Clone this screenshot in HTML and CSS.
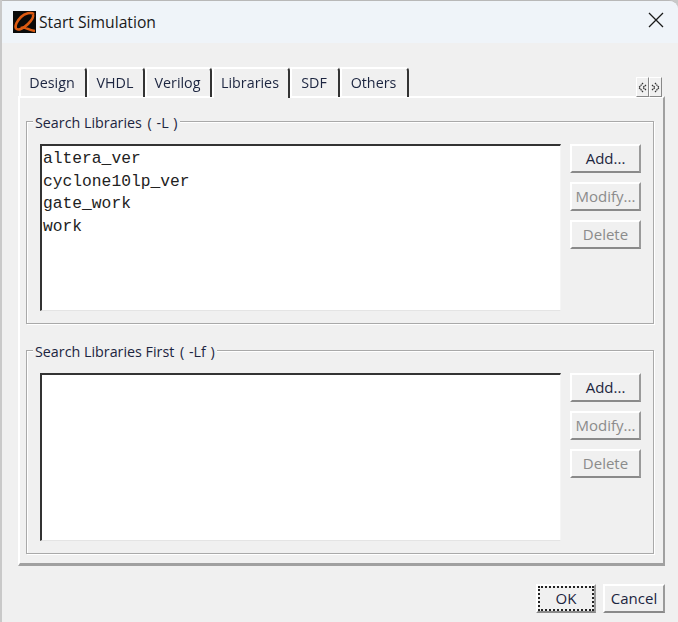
FILE: index.html
```html
<!DOCTYPE html>
<html lang="en">
<head>
<meta charset="utf-8">
<title>Start Simulation</title>
<link rel="stylesheet" href="styles.css">
</head>
<body>
<div class="window">
  <header class="titlebar">
    <svg class="logo" width="23" height="22" viewBox="0 0 23 22">
      <rect width="23" height="22" fill="#0a0a0a"/>
      <path d="M21 3C18 1 12 2 8 6C4 10 1.500 15 3 17.500C5 20 11 17 15 13C18 10 21 6 20 3.500M8 17C12 15 14 19 22 20" fill="none" stroke="#dc5a12" stroke-width="2.600"/>
    </svg>
    <span class="title">Start Simulation</span>
    <svg class="close" width="16" height="16" viewBox="0 0 16 16">
      <path d="M1 1L15 15M15 1L1 15" stroke="#1a1a1a" stroke-width="1.3" fill="none"/>
    </svg>
  </header>
  <div class="content">
    <nav class="tabbar">
      <div class="tab tab-design">Design</div>
      <div class="tab tab-vhdl">VHDL</div>
      <div class="tab tab-verilog">Verilog</div>
      <div class="tab tab-libraries active">Libraries</div>
      <div class="tab tab-sdf">SDF</div>
      <div class="tab tab-others">Others</div>
      <div class="scroller">
        <div class="scroll-btn"><svg width="9" height="11" viewBox="0 0 9 11"><path d="M5 1L1 5.500L5 10M8 3L5 5.500L8 8" fill="none" stroke="#333" stroke-width="1.300" stroke-dasharray="1.500 .6"/></svg></div>
        <div class="scroll-btn"><svg width="9" height="11" viewBox="0 0 9 11"><path d="M4 1L8 5.500L4 10M1 3L4 5.500L1 8" fill="none" stroke="#333" stroke-width="1.300" stroke-dasharray="1.500 .6"/></svg></div>
      </div>
    </nav>
    <main class="panel">
      <section class="group group-first">
        <div class="legend">Search Libraries <span class="flag">( -L )</span></div>
        <div class="group-body">
          <div class="list list-first">
            <div>altera_ver</div>
            <div>cyclone10lp_ver</div>
            <div>gate_work</div>
            <div>work</div>
          </div>
          <div class="actions">
            <button class="btn">Add...</button>
            <button class="btn" disabled>Modify...</button>
            <button class="btn" disabled>Delete</button>
          </div>
        </div>
      </section>
      <section class="group">
        <div class="legend">Search Libraries First <span class="flag">( -Lf )</span></div>
        <div class="group-body">
          <div class="list"></div>
          <div class="actions">
            <button class="btn">Add...</button>
            <button class="btn" disabled>Modify...</button>
            <button class="btn" disabled>Delete</button>
          </div>
        </div>
      </section>
    </main>
    <footer class="footer">
      <button class="btn btn-ok"><span class="focus">OK</span></button>
      <button class="btn btn-cancel">Cancel</button>
    </footer>
  </div>
</div>
</body>
</html>
```
FILE: styles.css
```css
* { box-sizing: border-box; }
html, body { margin: 0; height: 100%; }
body {
  background: #c9c9c9;
  overflow: hidden;
  font-family: "Open Sans", "Noto Sans", "Liberation Sans", sans-serif;
  color: #1c2540;
}
.window {
  margin-left: 2px;
  height: 622px;
  background: #f0f0f0;
  border-top: 1px solid #b8b8b8;
  border-top-right-radius: 9px;
  overflow: hidden;
  filter: blur(.25px);
}
.titlebar {
  height: 42px;
  background: #eff4f9;
  display: flex;
  align-items: center;
  padding: 0 14px 0 11px;
}
.logo { margin-right: 3px; margin-top: -1px; }
.title { font-size: 15.7px; color: #1a1a1a; flex: 1; margin-top: -1px; }
.close { margin-top: -4px; }
.content { padding: 0 0 0 16px; }
.tabbar {
  display: flex;
  height: 54px;
  padding: 24px 16px 0 1px;
  position: relative;
  z-index: 1;
}
.tab {
  height: 30px;
  font-size: 14.3px;
  line-height: 28px;
  text-align: center;
  padding-right: 2px;
  border-top: 2px solid #fff;
  border-left: 2px solid #fff;
  border-right: 2px solid #333;
  border-top-right-radius: 4px;
  color: #1c2540;
}
.tab-design { width: 68px; }
.tab-vhdl { width: 58px; }
.tab-verilog { width: 67px; }
.tab-libraries { width: 78px; }
.tab-sdf { width: 50px; }
.tab-others { width: 69px; }
.active { height: 31px; background: #f0f0f0; }
.scroller { margin-left: auto; margin-top: 10px; display: flex; height: 20px; }
.scroll-btn {
  width: 13px;
  height: 20px;
  border-top: 1px solid #fff;
  border-left: 1px solid #fff;
  border-right: 1px solid #888;
  border-bottom: 1px solid #888;
  display: flex;
  align-items: center;
  justify-content: center;
}
.panel {
  width: 647px;
  height: 470px;
  margin-top: -1px;
  padding: 23px 9px 9px 6px;
  border-top: 2px solid #fff;
  border-left: 2px solid #fff;
  border-right: 2px solid #a0a0a0;
  border-bottom: 3px solid #a0a0a0;
  display: flex;
  flex-direction: column;
  gap: 26px;
}
.group {
  width: 628px;
  height: 204px;
  flex: none;
  border: 1px solid #a9a9a9;
  box-shadow: inset 1px 1px 0 #fff, 1px 1px 0 #fff;
  padding: 0 12px 0 13px;
}
.group-first { height: 203px; }
.legend {
  font-size: 14.3px;
  line-height: 20px;
  height: 20px;
  margin: -9px 0 0 -7px;
  padding: 0 2px;
  width: max-content;
  background: #f0f0f0;
  color: #1c2540;
}
.flag { word-spacing: 1px; margin-left: 2px; }
.group-body {
  display: flex;
  gap: 9px;
  margin-top: 11px;
}
.list {
  flex: none;
  width: 521px;
  height: 168px;
  background: #fff;
  border-top: 2px solid #333;
  border-left: 2px solid #333;
  border-right: 1px solid #f5f5f5;
  border-bottom: 1px solid #e4e4e4;
  padding: 2px 0 0 1px;
  font-family: "Liberation Mono", monospace;
  font-size: 16.3px;
  line-height: 22.7px;
  color: #222;
}
.list-first { height: 167px; }
.actions { display: flex; flex-direction: column; gap: 9px; }
.btn {
  width: 71px;
  height: 29px;
  padding: 0 0 2px;
  background: #f0f0f0;
  border-top: 2px solid #fff;
  border-left: 2px solid #fff;
  border-right: 2px solid #9a9a9a;
  border-bottom: 2px solid #8a8a8a;
  font-family: "Open Sans", "Noto Sans", sans-serif;
  font-size: 15px;
  color: #1c2540;
  display: flex;
  align-items: center;
  justify-content: center;
}
.btn:disabled { color: #8b8b8b; }
.footer {
  display: flex;
  justify-content: flex-end;
  gap: 7px;
  width: 647px;
  padding-top: 18px;
}
.btn-ok { width: 60px; padding: 0; }
.btn-cancel { width: 62px; }
.focus {
  width: 100%;
  height: 100%;
  border: 2px dotted #222;
  line-height: 20px;
}
```
